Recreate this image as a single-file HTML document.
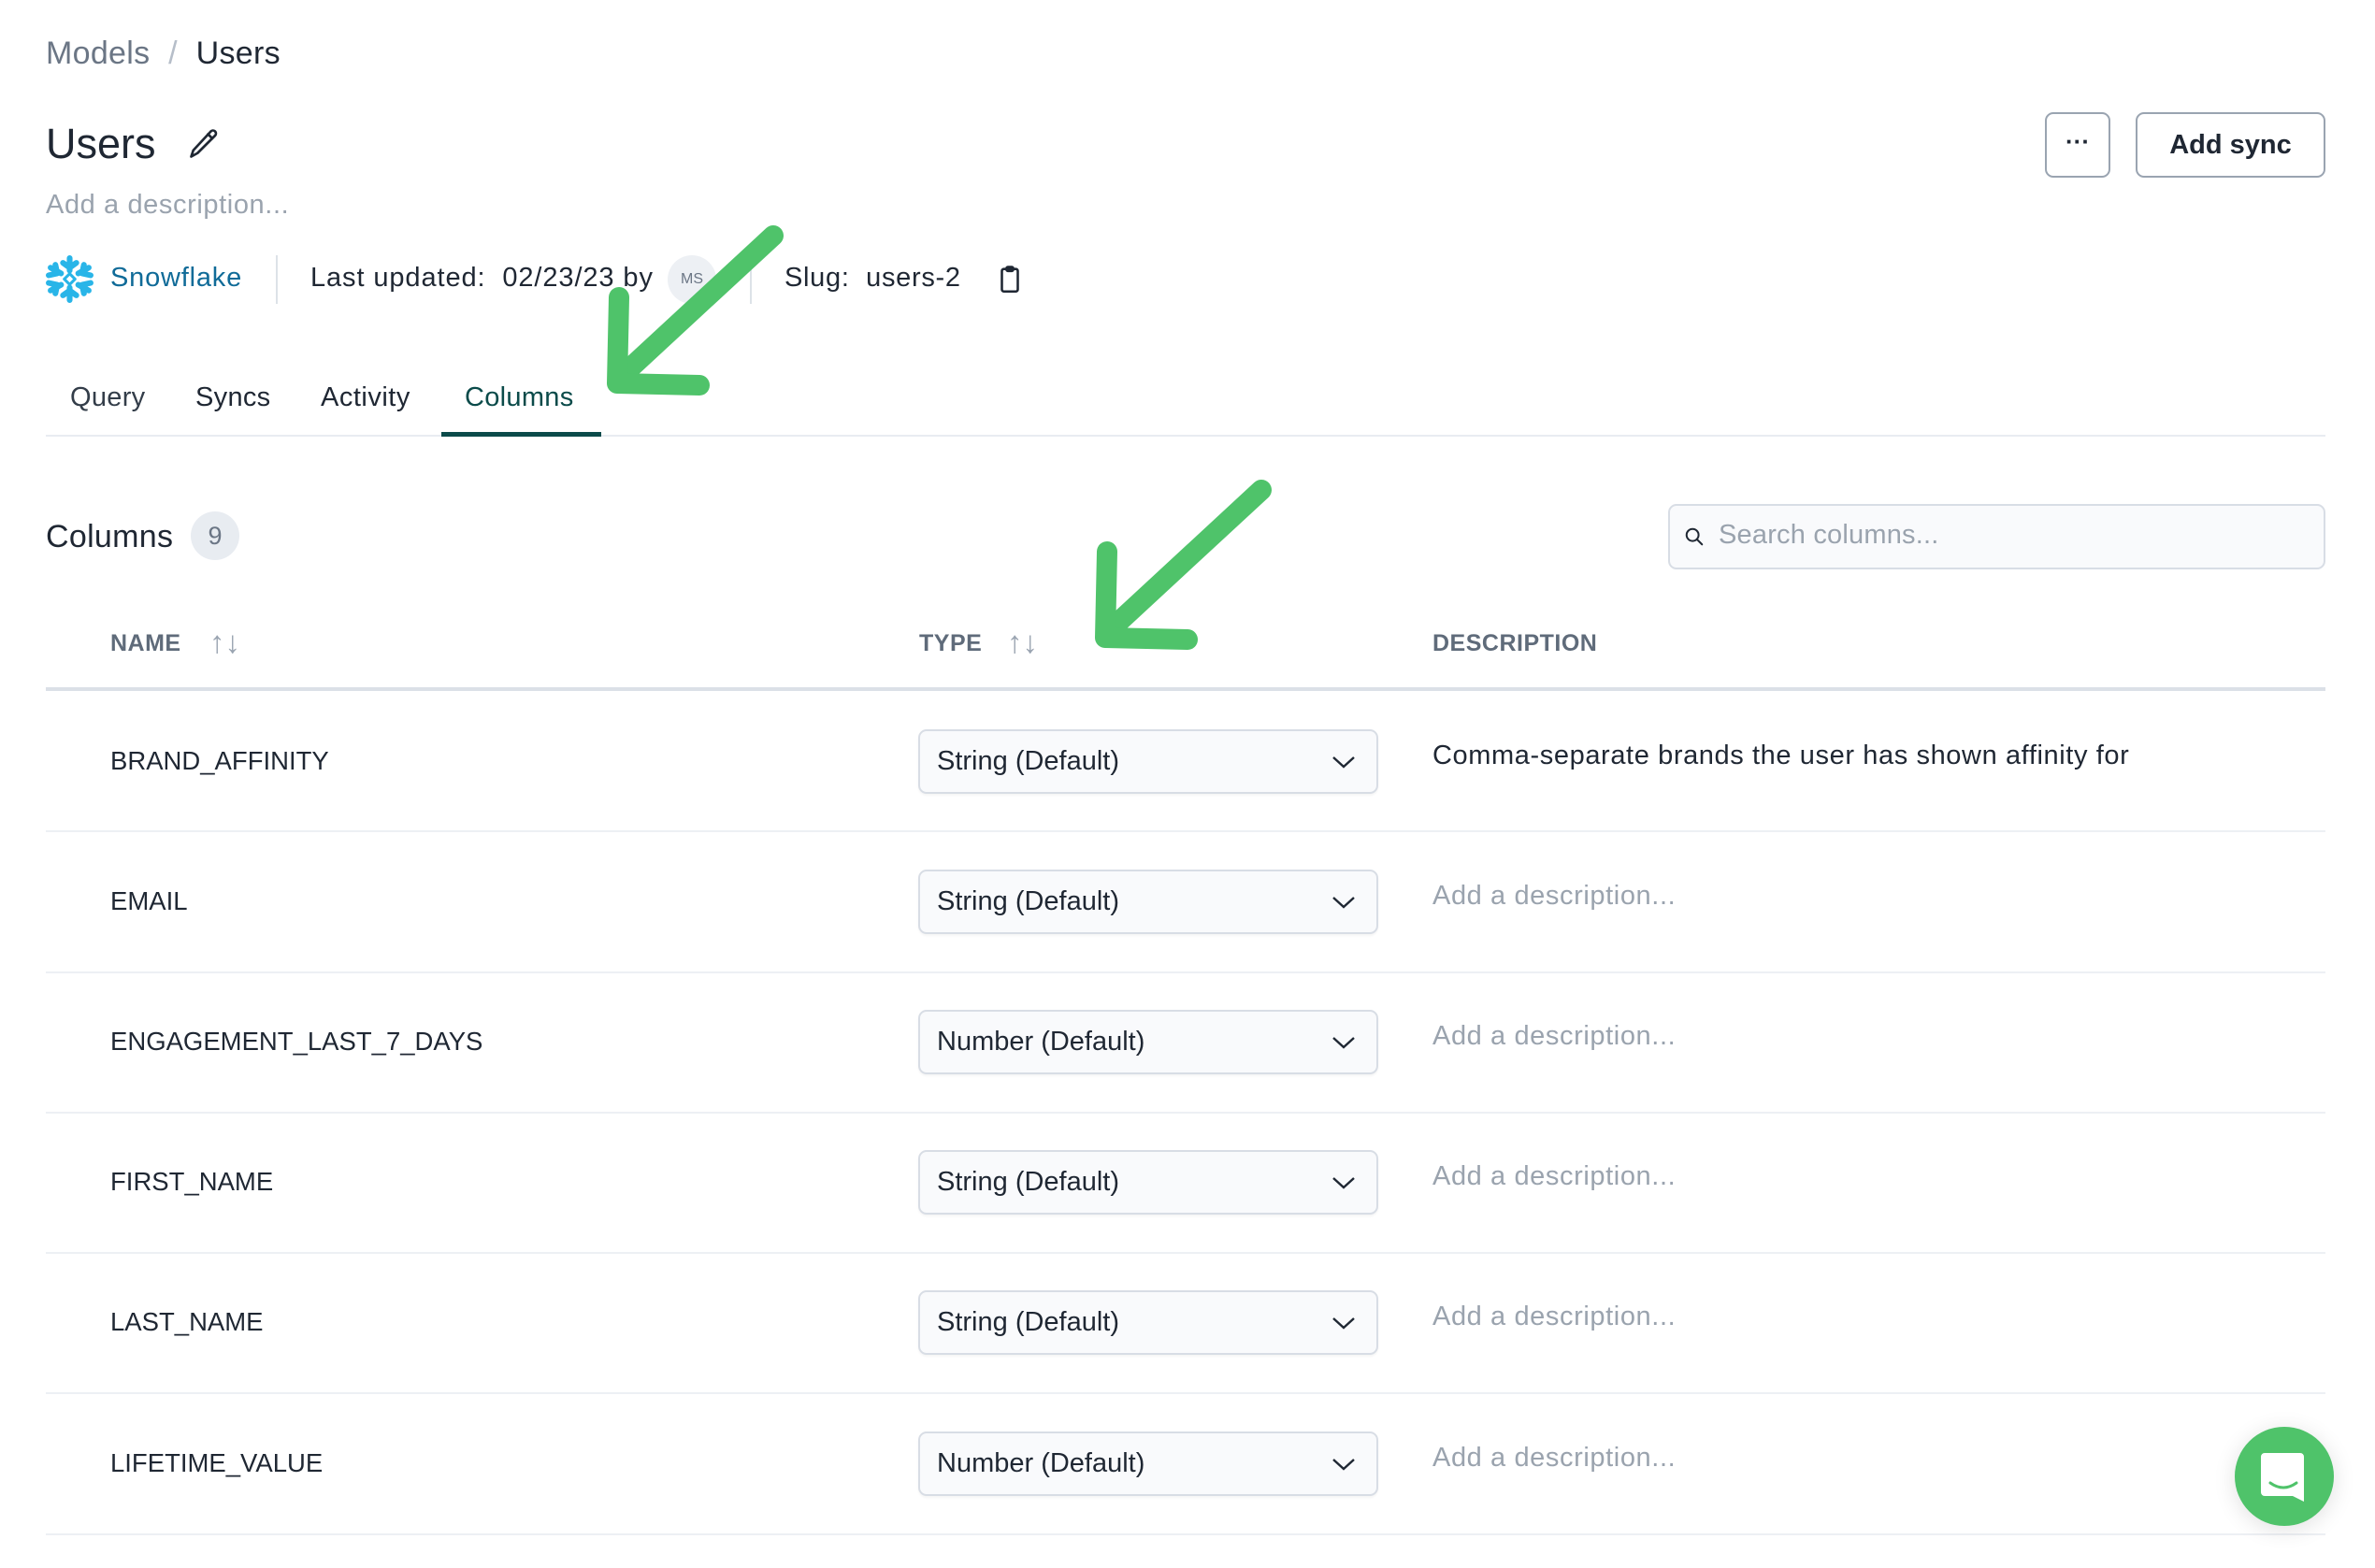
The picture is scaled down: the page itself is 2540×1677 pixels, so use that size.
<!DOCTYPE html>
<html><head><meta charset="utf-8"><style>
*{margin:0;padding:0;box-sizing:border-box}
body{width:2540px;height:1677px;background:#fff;font-family:"Liberation Sans",sans-serif;color:#1f2733;position:relative;overflow:hidden}
.a{position:absolute;white-space:nowrap}
.row-line{position:absolute;left:49px;width:2438px;height:2px;background:#edf0f4}
.name{position:absolute;left:118px;font-size:27.5px;color:#1f2733;line-height:34px}
.sel{position:absolute;left:982px;width:492px;height:69px;border:2px solid #d8dde5;border-radius:9px;background:#f9fafc;box-shadow:0 2px 2px rgba(0,0,0,0.04)}
.sel span{position:absolute;left:18px;top:16px;font-size:29px;color:#1f2733}
.sel svg{position:absolute;right:22px;top:24px}
.desc{position:absolute;left:1532px;font-size:29px;color:#9aa3ae;letter-spacing:0.6px}
.hd{position:absolute;top:674px;font-size:25px;font-weight:bold;color:#5f6b7a;letter-spacing:0.5px}
</style></head><body>
<div class="a" style="left:49px;top:38px;font-size:34px;color:#6b7685;letter-spacing:0.3px">Models <span style="color:#b6bec9;margin:0 10px">/</span> <span style="color:#1f2733">Users</span></div>
<div class="a" style="left:49px;top:128px;font-size:45px;color:#1f2733">Users</div>
<svg class="a" style="left:200px;top:136px" width="36" height="36" viewBox="0 0 24 24" fill="none" stroke="#1f2733" stroke-width="1.8" stroke-linecap="round" stroke-linejoin="round"><path d="M17 3a2.1 2.1 0 0 1 3 3L7.5 18.5 3 21l1.5-4.5Z"/><path d="M15 5l3 3"/></svg>
<div class="a" style="left:49px;top:203px;font-size:29px;color:#9aa3ae;letter-spacing:0.6px">Add a description...</div>

<svg class="a" style="left:48px;top:272px" width="53" height="53" viewBox="0 0 52 52" fill="none" stroke="#29b5e8" stroke-width="6" stroke-linecap="round" stroke-linejoin="round">
<path d="M26 4v13M19 9l7 5 7-5"/><path d="M26 48V35M19 43l7-5 7 5"/>
<path d="M6 14l11 6M4 22l9-2-2-9"/>
<path d="M46 14l-11 6M48 22l-9-2 2-9"/>
<path d="M6 38l11-6M4 30l9 2-2 9"/>
<path d="M46 38l-11-6M48 30l-9 2 2 9"/>
<rect x="22" y="22" width="8" height="8" transform="rotate(45 26 26)" stroke-width="3"/>
</svg>
<div class="a" style="left:118px;top:281px;font-size:29px;color:#106b98;letter-spacing:0.8px">Snowflake</div>
<div class="a" style="left:295px;top:273px;width:2px;height:52px;background:#dde2e8"></div>
<div class="a" style="left:332px;top:281px;font-size:29px;color:#1f2733;letter-spacing:0.9px">Last updated:&nbsp; 02/23/23 by</div>
<div class="a" style="left:714px;top:273px;width:52px;height:52px;border-radius:50%;background:#edf0f4;color:#6b7685;font-size:16px;text-align:center;line-height:52px">MS</div>
<div class="a" style="left:802px;top:273px;width:2px;height:52px;background:#dde2e8"></div>
<div class="a" style="left:839px;top:281px;font-size:29px;color:#1f2733;letter-spacing:0.7px">Slug:&nbsp; users-2</div>
<svg class="a" style="left:1063px;top:282px" width="34" height="34" viewBox="0 0 24 24" fill="none" stroke="#1f2733" stroke-width="1.8" stroke-linejoin="round"><rect x="6" y="4" width="12" height="17" rx="1.5"/><rect x="9.5" y="2.5" width="5" height="3" rx="1"/></svg>

<div class="a" style="left:2187px;top:120px;width:70px;height:70px;border:2px solid #9aa4b1;border-radius:9px;text-align:center;line-height:58px;font-size:26px;font-weight:bold">···</div>
<div class="a" style="left:2284px;top:120px;width:203px;height:70px;border:2px solid #9aa4b1;border-radius:9px;text-align:center;line-height:66px;font-size:29px;font-weight:bold">Add sync</div>

<div class="a" style="left:75px;top:409px;font-size:29px;color:#333d49;letter-spacing:0.3px">Query</div>
<div class="a" style="left:209px;top:409px;font-size:29px;color:#1f2733;letter-spacing:0.3px">Syncs</div>
<div class="a" style="left:343px;top:409px;font-size:29px;color:#1f2733;letter-spacing:0.5px">Activity</div>
<div class="a" style="left:497px;top:409px;font-size:29px;color:#0b4b4a;letter-spacing:0.3px">Columns</div>
<div class="a" style="left:49px;top:465px;width:2438px;height:2px;background:#e8ecf1"></div>
<div class="a" style="left:472px;top:462px;width:171px;height:5px;background:#0b4b4a"></div>

<div class="a" style="left:49px;top:555px;font-size:34px;color:#1f2733;letter-spacing:0.3px">Columns</div>
<div class="a" style="left:204px;top:547px;width:52px;height:52px;border-radius:50%;background:#e8ecf1;color:#6b7685;font-size:27px;text-align:center;line-height:52px">9</div>
<div class="a" style="left:1784px;top:539px;width:703px;height:70px;border:2px solid #d8dde5;border-radius:9px;background:#f9fafc"></div>
<svg class="a" style="left:1801px;top:563px" width="22" height="22" viewBox="0 0 24 24" fill="none" stroke="#1f2733" stroke-width="2.2" stroke-linecap="round"><circle cx="10" cy="10" r="7"/><path d="M15 15l6 6"/></svg>
<div class="a" style="left:1838px;top:556px;font-size:29px;color:#9aa3ae;letter-spacing:0.2px">Search columns...</div>

<div class="hd" style="left:118px">NAME</div>
<div class="a" style="left:224px;top:668px;font-size:33px;color:#9aa4b1">↑↓</div>
<div class="hd" style="left:983px">TYPE</div>
<div class="a" style="left:1077px;top:668px;font-size:33px;color:#9aa4b1">↑↓</div>
<div class="hd" style="left:1532px">DESCRIPTION</div>
<div class="a" style="left:49px;top:735px;width:2438px;height:4px;background:#dbe0e7"></div>

<div class="name" style="top:797px">BRAND_AFFINITY</div>
<div class="sel" style="top:780px"><span>String (Default)</span><svg width="26" height="18" viewBox="0 0 26 18" fill="none" stroke="#1f2733" stroke-width="2.4"><path d="M2 4l11 10 11-10"/></svg></div>
<div class="desc" style="top:792px;color:#1f2733">Comma-separate brands the user has shown affinity for</div>
<div class="row-line" style="top:888px"></div>

<div class="name" style="top:947px">EMAIL</div>
<div class="sel" style="top:930px"><span>String (Default)</span><svg width="26" height="18" viewBox="0 0 26 18" fill="none" stroke="#1f2733" stroke-width="2.4"><path d="M2 4l11 10 11-10"/></svg></div>
<div class="desc" style="top:942px">Add a description...</div>
<div class="row-line" style="top:1039px"></div>

<div class="name" style="top:1097px">ENGAGEMENT_LAST_7_DAYS</div>
<div class="sel" style="top:1080px"><span>Number (Default)</span><svg width="26" height="18" viewBox="0 0 26 18" fill="none" stroke="#1f2733" stroke-width="2.4"><path d="M2 4l11 10 11-10"/></svg></div>
<div class="desc" style="top:1092px">Add a description...</div>
<div class="row-line" style="top:1189px"></div>

<div class="name" style="top:1247px">FIRST_NAME</div>
<div class="sel" style="top:1230px"><span>String (Default)</span><svg width="26" height="18" viewBox="0 0 26 18" fill="none" stroke="#1f2733" stroke-width="2.4"><path d="M2 4l11 10 11-10"/></svg></div>
<div class="desc" style="top:1242px">Add a description...</div>
<div class="row-line" style="top:1339px"></div>

<div class="name" style="top:1397px">LAST_NAME</div>
<div class="sel" style="top:1380px"><span>String (Default)</span><svg width="26" height="18" viewBox="0 0 26 18" fill="none" stroke="#1f2733" stroke-width="2.4"><path d="M2 4l11 10 11-10"/></svg></div>
<div class="desc" style="top:1392px">Add a description...</div>
<div class="row-line" style="top:1489px"></div>

<div class="name" style="top:1548px">LIFETIME_VALUE</div>
<div class="sel" style="top:1531px"><span>Number (Default)</span><svg width="26" height="18" viewBox="0 0 26 18" fill="none" stroke="#1f2733" stroke-width="2.4"><path d="M2 4l11 10 11-10"/></svg></div>
<div class="desc" style="top:1543px">Add a description...</div>
<div class="row-line" style="top:1640px"></div>

<svg class="a" style="left:0;top:0" width="2540" height="1677" fill="none" stroke="#4fc36a" stroke-width="22" stroke-linecap="round" stroke-linejoin="round">
<path d="M827 252L667 400"/><path d="M662 318L660 410L748 412"/>
<path d="M1349 524L1189 672"/><path d="M1184 590L1182 682L1270 684"/>
</svg>

<div class="a" style="left:2390px;top:1526px;width:106px;height:106px;border-radius:50%;background:#4fc36a;box-shadow:0 4px 24px rgba(0,0,0,0.12)"></div>
<svg class="a" style="left:2418px;top:1554px" width="50" height="52" viewBox="0 0 50 52"><path d="M4 0H42a4 4 0 0 1 4 4V52L34 46H4a4 4 0 0 1-4-4V4a4 4 0 0 1 4-4Z" fill="#fff"/><path d="M10 32q14 10 28 0" stroke="#4fc36a" stroke-width="3" fill="none" stroke-linecap="round"/></svg>
</body></html>
